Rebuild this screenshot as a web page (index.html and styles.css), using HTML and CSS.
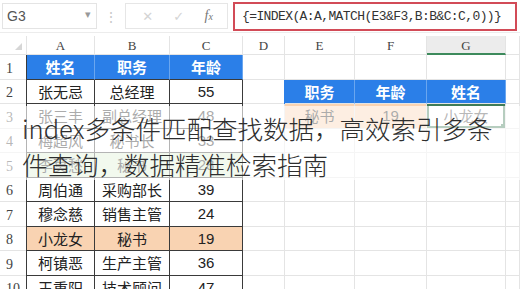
FILE: index.html
```html
<!DOCTYPE html>
<html lang="zh">
	<head>
		<meta charset="UTF-8" />
		<meta name="viewport" content="width=device-width, initial-scale=1.0" />
		<title>INDEX 多条件匹配</title>
		<link rel="stylesheet" href="styles.css">
	</head>
	<body>
		<div class="toolbar">
			<div class="namebox">
				<span>G3</span>
				<span class="drop">▾</span>
			</div>
			<div class="dots">⋮</div>
			<div class="fxbox">
				<span class="mark">✕</span>
				<span class="mark">✓</span>
				<span class="fx">f<small>x</small></span>
			</div>
			<div class="formula">{=INDEX(A:A,MATCH(E3&amp;F3,B:B&amp;C:C,0))}</div>
		</div>

		<div class="sheet">
			<!-- column letters -->
			<div class="c corner"></div>
			<div class="c col">A</div>
			<div class="c col">B</div>
			<div class="c col">C</div>
			<div class="c col">D</div>
			<div class="c col">E</div>
			<div class="c col">F</div>
			<div class="c col cur">G</div>
			<div class="c col"></div>

			<!-- row 1 -->
			<div class="c rh">1</div>
			<div class="c t a hd">姓名</div>
			<div class="c t hd">职务</div>
			<div class="c t hd">年龄</div>
			<div class="c"></div>
			<div class="c"></div>
			<div class="c"></div>
			<div class="c"></div>
			<div class="c"></div>

			<!-- row 2 -->
			<div class="c rh">2</div>
			<div class="c t a">张无忌</div>
			<div class="c t">总经理</div>
			<div class="c t num">55</div>
			<div class="c"></div>
			<div class="c hd hd-e">职务</div>
			<div class="c hd">年龄</div>
			<div class="c hd">姓名</div>
			<div class="c"></div>

			<!-- row 3 -->
			<div class="c rh">3</div>
			<div class="c t a">张三丰</div>
			<div class="c t">副总经理</div>
			<div class="c t num">48</div>
			<div class="c"></div>
			<div class="c pk">秘书</div>
			<div class="c pk num">19</div>
			<div class="c sel">小龙女</div>
			<div class="c"></div>

			<!-- row 4 -->
			<div class="c rh">4</div>
			<div class="c t a">梅超风</div>
			<div class="c t">秘书长</div>
			<div class="c t num">33</div>
			<div class="c"></div>
			<div class="c"></div>
			<div class="c"></div>
			<div class="c"></div>
			<div class="c"></div>

			<!-- row 5 -->
			<div class="c rh">5</div>
			<div class="c t a gr">李莫愁</div>
			<div class="c t gr">秘书</div>
			<div class="c t gr num">28</div>
			<div class="c"></div>
			<div class="c"></div>
			<div class="c"></div>
			<div class="c"></div>
			<div class="c"></div>

			<!-- row 6 -->
			<div class="c rh">6</div>
			<div class="c t a">周伯通</div>
			<div class="c t">采购部长</div>
			<div class="c t num">39</div>
			<div class="c"></div>
			<div class="c"></div>
			<div class="c"></div>
			<div class="c"></div>
			<div class="c"></div>

			<!-- row 7 -->
			<div class="c rh">7</div>
			<div class="c t a">穆念慈</div>
			<div class="c t">销售主管</div>
			<div class="c t num">24</div>
			<div class="c"></div>
			<div class="c"></div>
			<div class="c"></div>
			<div class="c"></div>
			<div class="c"></div>

			<!-- row 8 -->
			<div class="c rh">8</div>
			<div class="c t a pk">小龙女</div>
			<div class="c t pk">秘书</div>
			<div class="c t pk num">19</div>
			<div class="c"></div>
			<div class="c"></div>
			<div class="c"></div>
			<div class="c"></div>
			<div class="c"></div>

			<!-- row 9 -->
			<div class="c rh">9</div>
			<div class="c t a">柯镇恶</div>
			<div class="c t">生产主管</div>
			<div class="c t num">36</div>
			<div class="c"></div>
			<div class="c"></div>
			<div class="c"></div>
			<div class="c"></div>
			<div class="c"></div>

			<!-- row 10 -->
			<div class="c rh">10</div>
			<div class="c t a">王重阳</div>
			<div class="c t">技术顾问</div>
			<div class="c t num">47</div>
			<div class="c"></div>
			<div class="c"></div>
			<div class="c"></div>
			<div class="c"></div>
			<div class="c"></div>
		</div>

		<div class="caption">index多条件匹配查找数据，高效索引多条件查询，数据精准检索指南</div>
	</body>
</html>
```

FILE: styles.css
```css
body {
	margin: 0;
	width: 520px;
	height: 289px;
	overflow: hidden;
	position: relative;
	background: #fff;
	font-family: "Noto Sans CJK SC", "Liberation Sans", sans-serif;
	color: #222;
}
.toolbar {
	display: flex;
	align-items: center;
	height: 33px;
	padding: 0 3px 0 2px;
	box-sizing: border-box;
	border-bottom: 1px solid #ececec;
	margin-bottom: 3px;
}
.namebox {
	display: flex;
	align-items: center;
	justify-content: space-between;
	width: 95px;
	height: 26px;
	box-sizing: border-box;
	padding: 0 5px 0 4px;
	border: 1px solid #e4e4e4;
	font-family: "Liberation Sans", sans-serif;
	font-size: 14px;
	color: #555;
}
.drop {
	font-size: 11px;
	color: #999;
	margin-top: -4px;
}
.dots {
	width: 28px;
	text-align: center;
	color: #c8c8c8;
	font-size: 14px;
}
.fxbox {
	display: flex;
	align-items: center;
	justify-content: space-around;
	width: 103px;
	height: 26px;
	box-sizing: border-box;
	border: 1px solid #e6e6e6;
	padding: 0 4px 0 6px;
}
.mark {
	color: #d4d4d4;
	font-size: 13px;
	font-family: "DejaVu Sans", sans-serif;
}
.fx {
	font-family: "Liberation Serif", serif;
	font-style: italic;
	font-size: 14px;
	color: #777;
}
.fx small {
	font-size: 10px;
}
.formula {
	flex: 1;
	height: 29px;
	box-sizing: border-box;
	margin-left: 5px;
	margin-top: 1px;
	border: 2px solid #d24b57;
	padding: 0 0 0 7px;
	display: flex;
	align-items: center;
	font-family: "Liberation Mono", monospace;
	font-size: 13px;
	letter-spacing: -0.6px;
	color: #333;
}
.sheet {
	display: grid;
	grid-template-columns: 27px 68px 75px 73px 42px 70px 72px 79px 14px;
	grid-template-rows: 19px repeat(10, 24.5px);
}
.c {
	box-sizing: border-box;
	border-right: 1px solid #e4e4e4;
	border-bottom: 1px solid #e4e4e4;
	display: flex;
	align-items: center;
	justify-content: center;
	font-size: 15px;
	white-space: nowrap;
	overflow: hidden;
}
.col {
	font-family: "Liberation Serif", serif;
	font-size: 13px;
	color: #444;
	padding-top: 2px;
}
.cur {
	background: #ececec;
	border-bottom: 2px solid #3d8a5c;
}
.corner {
	position: relative;
}
.corner::after {
	content: "";
	position: absolute;
	right: 4px;
	bottom: 4px;
	border-left: 7px solid transparent;
	border-bottom: 7px solid #d6d6d6;
}
.rh {
	font-family: "Liberation Serif", serif;
	font-size: 14px;
	color: #444;
	justify-content: flex-start;
	padding-left: 6px;
	padding-top: 4px;
}
.t {
	border-right-color: #3a3a3a;
	border-bottom-color: #3a3a3a;
}
.a {
	box-shadow: -1px 0 0 #3a3a3a;
}
.hd {
	background: #2b7fe8;
	color: #fff;
	font-weight: bold;
	border-right-color: #6aa6ef;
}
.hd-e {
	box-shadow: -1px 0 0 #2b7fe8;
}
.pk {
	background: #f9d3b2;
}
.gr {
	background: #dcefd3;
}
.num {
	font-family: "Liberation Sans", sans-serif;
	font-size: 15px;
}
.sel {
	position: relative;
	box-shadow: inset 0 0 0 2px #3f7c57;
	color: #444;
}
.sel::after {
	content: "";
	position: absolute;
	right: -1px;
	bottom: -1px;
	width: 5px;
	height: 5px;
	background: #3f7c57;
}
.caption {
	position: absolute;
	left: 0;
	top: 106px;
	width: 520px;
	height: 74px;
	box-sizing: border-box;
	padding: 4px 8px 0 22px;
	background: rgba(255, 255, 255, 0.62);
	font-family: "Noto Sans CJK SC", sans-serif;
	font-weight: 300;
	font-size: 25.5px;
	line-height: 36px;
	color: #2e2e2e;
}
```
